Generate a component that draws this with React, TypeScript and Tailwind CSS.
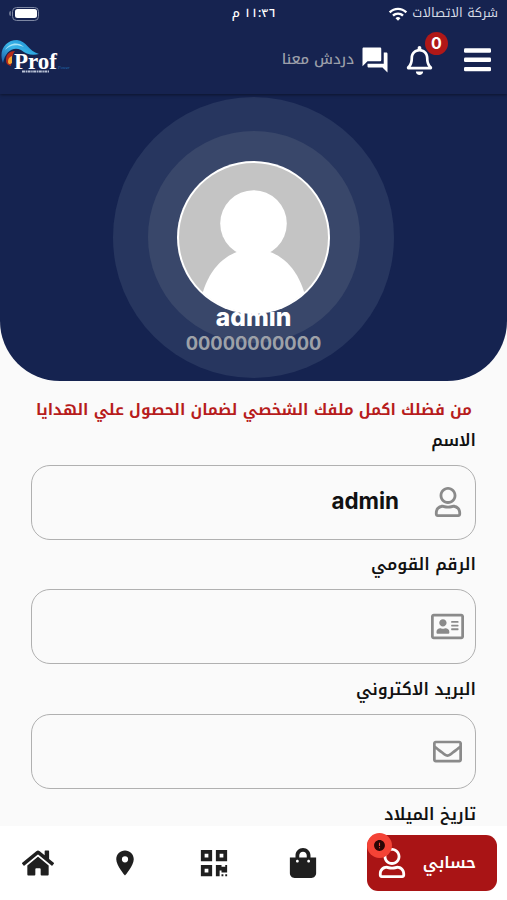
import {
  FaHome,
  FaQrcode,
  FaRegAddressCard,
  FaRegBell,
  FaRegEnvelope,
  FaRegUser,
  FaShoppingBag,
} from "react-icons/fa";
import { MdError, MdForum, MdLocationOn, MdWifi } from "react-icons/md";

interface fieldProps {
  label: string;
  value?: string;
  icon?: any;
}

function Logo() {
  return (
    <svg width="72" height="36" viewBox="0 0 72 36" direction="ltr">
      <defs>
        <linearGradient id="wave" x1="0" y1="1" x2="1" y2="0">
          <stop offset="0" stopColor="#1c5fa8" />
          <stop offset="0.5" stopColor="#39b5e8" />
          <stop offset="1" stopColor="#1687cf" />
        </linearGradient>
      </defs>
      <path d="M3 23C-2 10 6 0 17 0c10 1 11 11 22 14-7 2-13 0-18-4C13 6 5 12 3 23z" fill="url(#wave)" />
      <path d="M5 10C9 3 18 1 24 7 16 4 10 5 5 10z" fill="#a7e3f5" />
      <path d="M6 20c0-6 4-9 9-9-3 3-3 8-4 15-4-1-5-3-5-6z" fill="#b52a1b" />
      <path d="M8 22c0-4 2-5 4-6v7c-2 2-4 1-4-1z" fill="#f6a932" />
      <text x="14" y="29" textLength="43" lengthAdjust="spacingAndGlyphs" fill="#fff" fontFamily="Liberation Serif, serif" fontSize="24" fontWeight="700">
        Prof
      </text>
      <text x="58" y="29" fill="#1f6db5" fontFamily="Liberation Serif, serif" fontSize="4.5" fontStyle="italic">
        Power
      </text>
      <path d="M22 31.5h27" stroke="#b9c2d6" strokeWidth="1.8" strokeDasharray="3 0.6 1.5 0.5" />
    </svg>
  );
}

function MenuIcon() {
  return (
    <svg width="27" height="24" viewBox="0 0 27 24" fill="currentColor">
      <rect y="0.3" width="27" height="4.4" rx="1.3" />
      <rect y="9.6" width="27" height="4.4" rx="1.3" />
      <rect y="18.9" width="27" height="4.4" rx="1.3" />
    </svg>
  );
}

function Field({ label, value, icon }: fieldProps) {
  return (
    <div className="h-[124.8px]">
      <div className="h-[38px] leading-[28px] text-[16.5px] font-semibold text-[#111]">{label}</div>
      <div className="flex items-center h-[75px] rounded-[19px] border-[1.5px] border-[#b0b0b0] pr-[11px]">
        <div className="flex justify-center w-[33px] text-[#8a8a8a]">{icon}</div>
        <div className="mr-[32px] text-[22.4px] leading-6 font-bold text-[#111] font-['Inter',sans-serif] -mt-0.5">
          {value}
        </div>
      </div>
    </div>
  );
}

function App() {
  return (
    <div
      dir="rtl"
      className="flex flex-col w-[507px] h-[900px] overflow-hidden bg-[#fafafa] font-['Noto_Kufi_Arabic','DejaVu_Sans',sans-serif]"
    >
      <div className="relative z-10 shrink-0 h-[94px] bg-[#162350] shadow-[0_1px_3px_rgba(0,0,0,0.45)]">
        <div className="grid grid-cols-3 items-center h-[27px] px-[9px] text-white">
          <div className="flex items-center gap-[4px] text-[12.8px] text-[#d5d9e4] whitespace-nowrap">
            شركة الاتصالات
            <MdWifi size={20} className="text-white" />
          </div>
          <div className="text-center text-[12.2px] font-medium">١١:٣٦ م</div>
          <div className="flex items-center justify-end">
            <div className="flex w-[27px] h-[14px] p-[1.5px] rounded-[4.5px] border border-[#7d87a3]">
              <div className="flex-1 rounded-[2.5px] bg-white" />
            </div>
            <div className="w-[2px] h-[5px] mr-px rounded-l-full bg-[#68728f]" />
          </div>
        </div>
        <div className="flex items-center h-[66px] pr-[16px] text-white">
          <MenuIcon />
          <div className="relative mr-[30px]">
            <FaRegBell size={29} />
            <div className="absolute -top-[14px] left-[20px] flex items-center justify-center size-[23px] rounded-full bg-[#b01818] text-[16px] font-bold font-['Inter',sans-serif]">
              0
            </div>
          </div>
          <MdForum size={30} className="mr-[15px]" />
          <div className="mr-[6px] text-[14.6px] font-medium text-[#9b9fa9] whitespace-nowrap">دردش معنا</div>
          <div className="flex-1" />
          <div className="-mt-1">
            <Logo />
          </div>
        </div>
      </div>

      <div className="shrink-0 h-[287px] pt-[3px] rounded-b-[60px] bg-[#152350]">
        <div className="flex flex-col items-center mx-auto size-[281px] pt-[34px] rounded-full bg-[#27365f]">
          <div className="shrink-0 size-[212px] pt-[30px] rounded-full bg-[#39476a]">
            <svg className="mx-auto" width="153" height="153" viewBox="0 0 153 153">
              <defs>
                <clipPath id="face">
                  <circle cx="76.5" cy="76.5" r="75" />
                </clipPath>
              </defs>
              <circle cx="76.5" cy="76.5" r="76.5" fill="#fff" />
              <circle cx="76.5" cy="76.5" r="74.5" fill="#c4c4c4" />
              <g clipPath="url(#face)" fill="#fff">
                <circle cx="76.5" cy="62.5" r="33.3" />
                <path d="M22 153C25 112 48 88 76.5 88S128 112 131 153z" />
              </g>
            </svg>
          </div>
          <div className="-mt-[41px] text-[24.6px] leading-[30px] font-extrabold text-white font-['Inter',sans-serif]">
            admin
          </div>
          <div className="text-[18.3px] leading-[22px] font-bold text-[#9da1a8] font-['Inter',sans-serif]">
            00000000000
          </div>
        </div>
      </div>

      <div className="flex-1 min-h-0 px-[31px]">
        <div className="h-[45.5px] pt-[15px] pr-1 text-[15.35px] leading-[28px] font-bold text-[#b71c1c] whitespace-nowrap">
          من فضلك اكمل ملفك الشخصي لضمان الحصول علي الهدايا
        </div>
        <Field label="الاسم" value="admin" icon={<FaRegUser size={30} />} />
        <Field label="الرقم القومي" icon={<FaRegAddressCard size={33} />} />
        <Field label="البريد الاكتروني" icon={<FaRegEnvelope size={29} />} />
        <Field label="تاريخ الميلاد" />
      </div>

      <div className="relative z-10 flex items-center shrink-0 h-[74px] pr-[10px] bg-white text-[#1f1f1f]">
        <div className="relative flex items-center w-[130px] h-[56px] rounded-[11px] bg-[#a91415] text-white">
          <div className="w-[90px] pr-[21px] text-[16.2px] font-semibold">حسابي</div>
          <FaRegUser size={30} />
          <div className="absolute -top-[2px] left-0 flex items-center justify-center size-[25px] rounded-full bg-[#f44336] text-[#2a0605]">
            <MdError size={13} />
          </div>
        </div>
        <FaShoppingBag size={30} className="mr-[49px]" />
        <FaQrcode size={30} className="mr-[59px]" />
        <MdLocationOn size={30} className="mr-[59px]" />
        <FaHome size={32} className="mr-[56px]" />
      </div>
    </div>
  );
}

export default App;
